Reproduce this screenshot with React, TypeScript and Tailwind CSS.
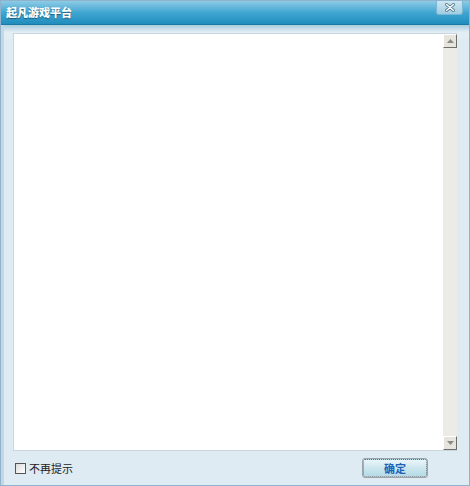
import React from 'react';

const font = { fontFamily: '"SimSun", "Noto Sans CJK SC", sans-serif' };

export default function App() {
  return (
    <div className="w-[470px] h-[486px] bg-white" style={font}>
      <div className="w-[470px] h-[486px] flex flex-col border border-[#8fb3cc] bg-[#dfebf3] overflow-hidden">
        {/* Title bar */}
        <div className="h-[24px] shrink-0 relative bg-gradient-to-b from-[#8ccbe6] via-[#3fa6d2] to-[#1f8dbd] border-b border-[#1a7aa6] flex items-center pl-[5px]">
          <span className="text-white text-[11px] font-black [text-shadow:0_1px_1px_#1a5c7a]">
            起凡游戏平台
          </span>
          <button className="absolute right-[6px] top-0 w-[27px] h-[14px] rounded-b-[3px] bg-gradient-to-b from-[#cfe7f2] to-[#9fcde2] border border-t-0 border-[#7ab7d3] flex items-center justify-center">
            <svg width="10" height="9" viewBox="0 0 10 9">
              <path d="M1.5 1.5 L8.5 7.5 M8.5 1.5 L1.5 7.5" stroke="#5a7d91" strokeWidth="3" strokeLinecap="round" />
              <path d="M1.5 1.5 L8.5 7.5 M8.5 1.5 L1.5 7.5" stroke="#ffffff" strokeWidth="1.4" strokeLinecap="round" />
            </svg>
          </button>
        </div>

        {/* Body */}
        <div className="flex-1 flex flex-col bg-gradient-to-b from-[#a9cbdd] via-[#e2edf4] to-[#e2edf4] bg-[length:100%_14px] bg-no-repeat border-l-[3px] border-[#c3d7e5]">
          <div className="flex-1 flex pt-[8px] pl-[9px] pr-[12px]">
            <div className="flex-1 flex border border-[#c9d6df] border-r-0">
              <div className="flex-1 bg-white" />
              <div className="w-[14px] flex flex-col bg-[#ecebe6]">
                <div className="h-[14px] bg-[#e6e4dc] border-r border-b border-[#6f6f6a] border-t border-l border-t-white border-l-white flex items-center justify-center">
                  <svg width="7" height="4" viewBox="0 0 7 4"><path d="M3.5 0 L7 4 L0 4 Z" fill="#8a8a86" /></svg>
                </div>
                <div className="flex-1" />
                <div className="h-[14px] bg-[#e6e4dc] border-r border-b border-[#6f6f6a] border-t border-l border-t-white border-l-white flex items-center justify-center">
                  <svg width="7" height="4" viewBox="0 0 7 4"><path d="M0 0 L7 0 L3.5 4 Z" fill="#8a8a86" /></svg>
                </div>
              </div>
            </div>
          </div>

          {/* Footer */}
          <div className="h-[34px] shrink-0 flex items-center justify-between pl-[11px] pr-[42px]">
            <label className="flex items-center gap-[3px] text-[11px] text-[#222]">
              <span className="w-[11px] h-[11px] border border-[#555] bg-gradient-to-br from-[#dcdcdc] to-white" />
              <span>不再提示</span>
            </label>
            <button className="w-[64px] h-[18px] rounded-[2px] border border-dotted border-[#6b7378] outline outline-1 outline-[#9aa4aa] bg-gradient-to-b from-[#eaf6f9] via-[#cce6ee] to-[#b5dae6] text-[11px] text-[#1c63b8] font-bold leading-none">
              确定
            </button>
          </div>
        </div>
      </div>
    </div>
  );
}
